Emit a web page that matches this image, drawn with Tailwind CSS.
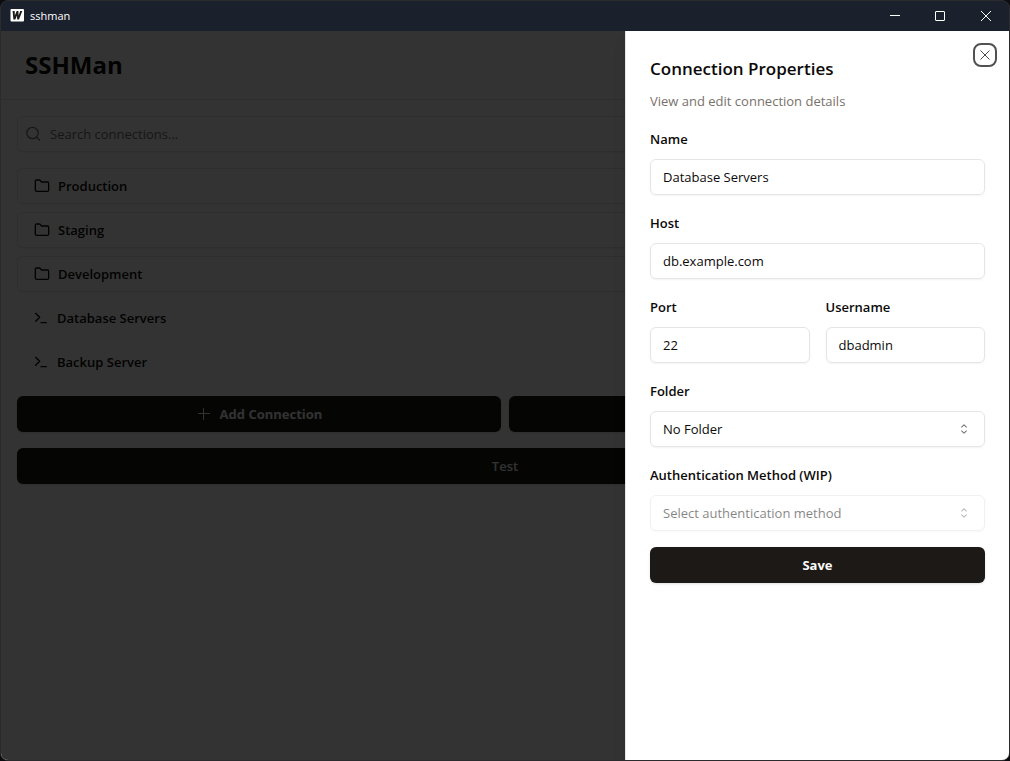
<!DOCTYPE html>
<html lang="en">
<head>
<meta charset="utf-8">
<meta name="viewport" content="width=device-width, initial-scale=1">
<title>sshman</title>
<script src="https://cdn.jsdelivr.net/npm/@tailwindcss/browser@4"></script>
</head>
<body class="bg-[#0c0c10] font-['Open_Sans','Noto_Sans',sans-serif] text-[13px] leading-5 text-stone-950">
<svg class="hidden">
  <symbol id="folder" viewBox="0 0 24 24"><path d="M20 20a2 2 0 0 0 2-2V8a2 2 0 0 0-2-2h-7.9a2 2 0 0 1-1.69-.9L9.6 3.9A2 2 0 0 0 7.93 3H4a2 2 0 0 0-2 2v13a2 2 0 0 0 2 2Z"/></symbol>
  <symbol id="terminal" viewBox="0 0 24 24"><path d="m4 17 6-6-6-6M12 19h8"/></symbol>
  <symbol id="updown" viewBox="0 0 15 15"><path fill="currentColor" fill-rule="evenodd" clip-rule="evenodd" d="M4.93179 5.43179C4.75605 5.60753 4.75605 5.89245 4.93179 6.06819C5.10753 6.24392 5.39245 6.24392 5.56819 6.06819L7.49999 4.13638L9.43179 6.06819C9.60753 6.24392 9.89245 6.24392 10.0682 6.06819C10.2439 5.89245 10.2439 5.60753 10.0682 5.43179L7.81819 3.18179C7.73379 3.0974 7.61933 3.04999 7.49999 3.04999C7.38064 3.04999 7.26618 3.0974 7.18179 3.18179L4.93179 5.43179ZM10.0682 9.56819C10.2439 9.39245 10.2439 9.10753 10.0682 8.93179C9.89245 8.75606 9.60753 8.75606 9.43179 8.93179L7.49999 10.8636L5.56819 8.93179C5.39245 8.75606 5.10753 8.75606 4.93179 8.93179C4.75605 9.10753 4.75605 9.39245 4.93179 9.56819L7.18179 11.8182C7.26618 11.9026 7.38064 11.95 7.49999 11.95C7.61933 11.95 7.73379 11.9026 7.81819 11.8182L10.0682 9.56819Z"/></symbol>
</svg>
<div class="flex h-screen flex-col overflow-hidden rounded-lg border border-[#2b2b2d] bg-[#333333]">
  <header class="flex h-[30px] shrink-0 items-center justify-between bg-[#1a202c] text-white">
    <div class="flex items-center gap-[5px] pl-2 text-[11px]">
      <svg class="size-4" viewBox="0 0 16 16"><rect x="1.500" y="1" width="13.500" height="12.500" rx="1" fill="#fff"/><path fill="#1a1a1a" d="M3.600 3h2.100l.1 4.500L7.700 3h1.700l.2 4.500L11.300 3h2l-3.300 8.500H8.200L8 7.500l-1.700 4H4.400z"/></svg>
      <span>sshman</span>
    </div>
    <div class="flex h-full">
      <button type="button" aria-label="Minimize" class="grid w-[45px] place-items-center"><svg class="size-[11px]" viewBox="0 0 11 11" fill="none" stroke="currentColor"><path d="M0 4.500h10"/></svg></button>
      <button type="button" aria-label="Maximize" class="grid w-[45px] place-items-center"><svg class="size-[11px]" viewBox="0 0 11 11" fill="none" stroke="currentColor"><rect x=".5" y=".5" width="9" height="9" rx=".5"/></svg></button>
      <button type="button" aria-label="Close window" class="grid w-[46px] place-items-center"><svg class="size-[11px]" viewBox="0 0 11 11" fill="none" stroke="currentColor"><path d="m0 0 10 10m0-10-10 10"/></svg></button>
    </div>
  </header>

  <div class="relative flex min-h-0 flex-1 flex-col bg-white">
    <div class="border-b border-stone-200 px-6 py-4">
      <h1 class="flex h-9 items-center text-2xl font-bold">SSHMan</h1>
    </div>
    <main class="flex flex-col gap-4 p-4">
      <label class="flex h-9 items-center gap-2 rounded-md border border-stone-200 px-2 shadow-xs">
        <svg class="size-4 text-stone-500" viewBox="0 0 16 16" fill="none" stroke="currentColor" stroke-width="1.300" stroke-linecap="round"><circle cx="6.500" cy="7" r="5.700"/><path d="m10.700 11.200 3 3"/></svg>
        <input type="search" aria-label="Search connections" placeholder="Search connections..." class="min-w-0 flex-1 bg-transparent outline-none placeholder:text-stone-500">
      </label>
      <nav class="flex flex-col gap-2 font-semibold">
        <button type="button" class="flex h-9 items-center gap-2 rounded-md border border-stone-200 px-4 shadow-xs"><svg class="size-4" fill="none" stroke="currentColor" stroke-width="2" stroke-linejoin="round"><use href="#folder"/></svg>Production</button>
        <button type="button" class="flex h-9 items-center gap-2 rounded-md border border-stone-200 px-4 shadow-xs"><svg class="size-4" fill="none" stroke="currentColor" stroke-width="2" stroke-linejoin="round"><use href="#folder"/></svg>Staging</button>
        <button type="button" class="flex h-9 items-center gap-2 rounded-md border border-stone-200 px-4 shadow-xs"><svg class="size-4" fill="none" stroke="currentColor" stroke-width="2" stroke-linejoin="round"><use href="#folder"/></svg>Development</button>
        <button type="button" class="flex h-9 items-center gap-2 rounded-md px-4"><svg class="size-4" fill="none" stroke="currentColor" stroke-width="2" stroke-linecap="round" stroke-linejoin="round"><use href="#terminal"/></svg>Database Servers</button>
        <button type="button" class="flex h-9 items-center gap-2 rounded-md px-4"><svg class="size-4" fill="none" stroke="currentColor" stroke-width="2" stroke-linecap="round" stroke-linejoin="round"><use href="#terminal"/></svg>Backup Server</button>
      </nav>
      <div class="grid grid-cols-2 gap-2 font-bold text-stone-50">
        <button type="button" class="flex h-9 items-center justify-center gap-2 rounded-md bg-stone-900 shadow-sm"><svg class="size-4" viewBox="0 0 16 16" fill="none" stroke="currentColor" stroke-linecap="round"><path d="M2.500 7.500h11M7.500 2.500v11"/></svg>Add Connection</button>
        <button type="button" aria-label="Add Folder" class="h-9 rounded-md bg-stone-900 shadow-sm"></button>
      </div>
      <button type="button" class="h-9 rounded-md bg-stone-900 font-semibold text-stone-50 shadow-sm">Test</button>
    </main>

    <div class="absolute inset-0 bg-black/80"></div>

    <aside role="dialog" aria-labelledby="sheet-title" class="absolute inset-y-0 right-0 flex w-full max-w-96 flex-col gap-4 border-l border-stone-200 bg-white p-6 shadow-lg">
      <button type="button" aria-label="Close" class="absolute top-3 right-3 grid size-6 place-items-center rounded-lg border-2 border-[#535150] text-[#4b4948]">
        <svg class="size-4" viewBox="0 0 16 16" fill="none" stroke="currentColor"><path d="m3.500 3.500 9 9m0-9-9 9"/></svg>
      </button>
      <div class="flex flex-col gap-2">
        <h2 id="sheet-title" class="text-[17px] leading-7 font-semibold">Connection Properties</h2>
        <p class="text-stone-500">View and edit connection details</p>
      </div>
      <form class="flex flex-col gap-4">
        <div class="flex flex-col gap-2">
          <label for="name" class="leading-6 font-semibold">Name</label>
          <input id="name" value="Database Servers" class="h-9 w-full rounded-md border border-stone-200 px-3 shadow-xs">
        </div>
        <div class="flex flex-col gap-2">
          <label for="host" class="leading-6 font-semibold">Host</label>
          <input id="host" value="db.example.com" class="h-9 w-full rounded-md border border-stone-200 px-3 shadow-xs">
        </div>
        <div class="grid grid-cols-2 gap-4">
          <div class="flex flex-col gap-2">
            <label for="port" class="leading-6 font-semibold">Port</label>
            <input id="port" value="22" class="h-9 w-full rounded-md border border-stone-200 px-3 shadow-xs">
          </div>
          <div class="flex flex-col gap-2">
            <label for="user" class="leading-6 font-semibold">Username</label>
            <input id="user" value="dbadmin" class="h-9 w-full rounded-md border border-stone-200 px-3 shadow-xs">
          </div>
        </div>
        <div class="flex flex-col gap-2">
          <label for="folder-select" class="leading-6 font-semibold">Folder</label>
          <div class="grid items-center">
            <select id="folder-select" class="col-start-1 row-start-1 h-9 appearance-none rounded-md border border-stone-200 px-3 shadow-xs"><option>No Folder</option></select>
            <svg class="pointer-events-none col-start-1 row-start-1 mr-[13px] size-4 justify-self-end opacity-60"><use href="#updown"/></svg>
          </div>
        </div>
        <div class="flex flex-col gap-2">
          <label for="auth" class="leading-6 font-semibold">Authentication Method (WIP)</label>
          <div class="grid items-center opacity-50">
            <select id="auth" disabled class="col-start-1 row-start-1 h-9 appearance-none rounded-md border border-stone-200 px-3 opacity-100 shadow-xs"><option>Select authentication method</option></select>
            <svg class="pointer-events-none col-start-1 row-start-1 mr-[13px] size-4 justify-self-end opacity-60"><use href="#updown"/></svg>
          </div>
        </div>
        <button type="button" class="h-9 rounded-md bg-stone-900 font-bold text-stone-50 shadow-sm">Save</button>
      </form>
    </aside>
  </div>
</div>
</body>
</html>
